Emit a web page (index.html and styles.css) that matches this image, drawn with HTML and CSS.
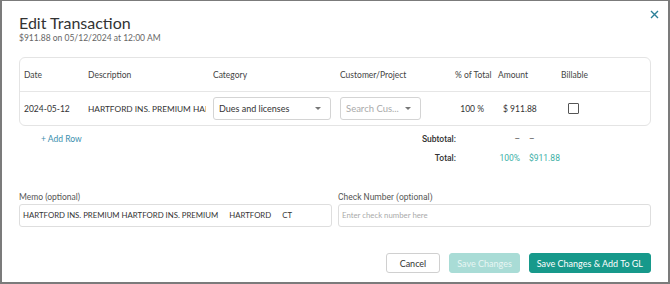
FILE: index.html
```html
<!DOCTYPE html>
<html lang="en">
<head>
  <meta charset="UTF-8">
  <title>Edit Transaction</title>
  <link rel="stylesheet" href="styles.css">
</head>
<body>
  <div class="modal">
    <button class="close" aria-label="Close">
      <svg width="9" height="9" viewBox="0 0 9 9"><path d="M1 1 L8 8 M8 1 L1 8" stroke="#2b7f98" stroke-width="1.4" fill="none"/></svg>
    </button>

    <h1 class="title">Edit Transaction</h1>
    <p class="subtitle">$911.88 on 05/12/2024 at 12:00 AM</p>

    <div class="table">
      <div class="row head">
        <span>Date</span>
        <span>Description</span>
        <span>Category</span>
        <span>Customer/Project</span>
        <span>% of Total</span>
        <span>Amount</span>
        <span class="center">Billable</span>
      </div>
      <div class="row body">
        <span>2024-05-12</span>
        <span class="desc">HARTFORD INS. PREMIUM HAR</span>
        <span><div class="select">Dues and licenses<i class="caret"></i></div></span>
        <span><div class="select cust placeholder">Search Cus...<i class="caret"></i></div></span>
        <span class="pct">100 %</span>
        <span class="amt">$ 911.88</span>
        <span class="center"><i class="check"></i></span>
      </div>
    </div>

    <div class="totals">
      <a class="add-row">+ Add Row</a>
      <span class="label">Subtotal:</span>
      <span class="v1">–</span>
      <span class="v2">–</span>
      <span></span>
      <span class="label">Total:</span>
      <span class="v1 teal">100%</span>
      <span class="v2 teal">$911.88</span>
    </div>

    <div class="fields">
      <label class="field">
        <span class="field__label">Memo (optional)</span>
        <span class="input">HARTFORD INS. PREMIUM HARTFORD INS. PREMIUM<span class="gap"></span>HARTFORD<span class="gap"></span>CT</span>
      </label>
      <label class="field">
        <span class="field__label alt">Check Number (optional)</span>
        <span class="input placeholder">Enter check number here</span>
      </label>
    </div>

    <div class="actions">
      <button class="btn">Cancel</button>
      <button class="btn primary disabled">Save Changes</button>
      <button class="btn primary">Save Changes &amp; Add To GL</button>
    </div>
  </div>
</body>
</html>
```

FILE: styles.css
```css
* { padding:0; margin:0; box-sizing:border-box; }
body { font-family:Lato, "Open Sans", sans-serif; color:#333; background:#fff; }

:root {
  --teal: #17998b;
  --teal-light: #a9dcd6;
  --teal-text: #3bb0a6;
  --border: #dedede;
}

.modal {
  position: relative;
  width: 670px;
  height: 284px;
  border: 1px solid #7b7b7b;
  border-width: 1px 2px 2px 2px;
  padding: 12px 17px 0 17px;
}

.close {
  position: absolute;
  top: 6px;
  right: 9px;
  border: none;
  background: transparent;
  width: 10px;
  height: 10px;
}

.title {
  font-size: 16px;
  font-weight: 400;
  line-height: 20px;
  color: #333;
}

.subtitle {
  font-size: 8.5px;
  color: #666;
  line-height: 11px;
}

.table {
  margin-top: 13px;
  border: 1px solid #e4e4e4;
  border-radius: 6px;
  font-size: 8.5px;
}

.row {
  display: grid;
  grid-template-columns: 64px 125px 127px 115px 43px 63px 1fr;
  align-items: center;
  padding-left: 4px;
}

.head {
  height: 34px;
  color: #444;
  border-bottom: 1px solid #e6e6e6;
}

.body {
  height: 33px;
  color: #333;
}

.center { text-align: center; padding-right: 64px; }

.desc {
  font-size: 8.3px;
  white-space: nowrap;
  overflow: hidden;
  width: 118px;
}

.select {
  position: relative;
  width: 118px;
  height: 23px;
  border: 1px solid #d4d4d4;
  border-radius: 3px;
  font-size: 9px;
  line-height: 21px;
  padding-left: 5px;
  color: #333;
}

.select.cust { width: 81px; font-size: 9.5px; }

.placeholder { color: #aaa !important; }

.caret {
  position: absolute;
  right: 9px;
  top: 9px;
  border-left: 3px solid transparent;
  border-right: 3px solid transparent;
  border-top: 3px solid #777;
}

.pct { text-align: right; padding-right: 14px; font-size: 8.5px; }
.amt { padding-left: 5px; font-size: 8.5px; }

.check {
  display: inline-block;
  width: 11px;
  height: 11px;
  border: 1px solid #555;
  border-radius: 1px;
  vertical-align: middle;
}

.totals {
  display: grid;
  grid-template-columns: 200px 1fr 64px 131px;
  grid-template-rows: 18px 20px;
  align-items: center;
  margin-top: 4px;
  font-size: 8.5px;
}

.add-row {
  color: #3b8fae;
  padding-left: 22px;
}

.label {
  font-family: Roboto, sans-serif;
  font-weight: 500;
  text-align: right;
  color: #333;
}

.v1 { text-align: right; font-family: Roboto, sans-serif; color: #555; }
.v2 { padding-left: 9px; font-family: Roboto, sans-serif; color: #555; }
.teal { color: var(--teal-text); }

.fields {
  display: grid;
  grid-template-columns: 1fr 1fr;
  column-gap: 6px;
  margin-top: 23px;
}

.field { display: flex; flex-direction: column; }

.field__label {
  font-size: 8.5px;
  color: #555;
  line-height: 12px;
  margin-bottom: 1px;
}

.field__label.alt { font-family: Roboto, sans-serif; }

.input {
  height: 23px;
  border: 1px solid var(--border);
  border-radius: 3px;
  font-size: 7.8px;
  line-height: 21px;
  padding-left: 3px;
  white-space: nowrap;
  overflow: hidden;
}

.gap { display: inline-block; width: 11px; }

.actions {
  display: flex;
  justify-content: flex-end;
  gap: 9px;
  margin-top: 26px;
}

.btn {
  height: 20px;
  padding: 0 13px;
  border: 1px solid #d0d0d0;
  border-radius: 3px;
  background: #fff;
  font-family: Lato, sans-serif;
  font-size: 9px;
  color: #333;
}

.primary {
  background: var(--teal);
  border-color: var(--teal);
  color: #fff;
  padding: 0 7px;
}

.primary.disabled {
  background: var(--teal-light);
  border-color: var(--teal-light);
  color: #e8f6f4;
}
```
